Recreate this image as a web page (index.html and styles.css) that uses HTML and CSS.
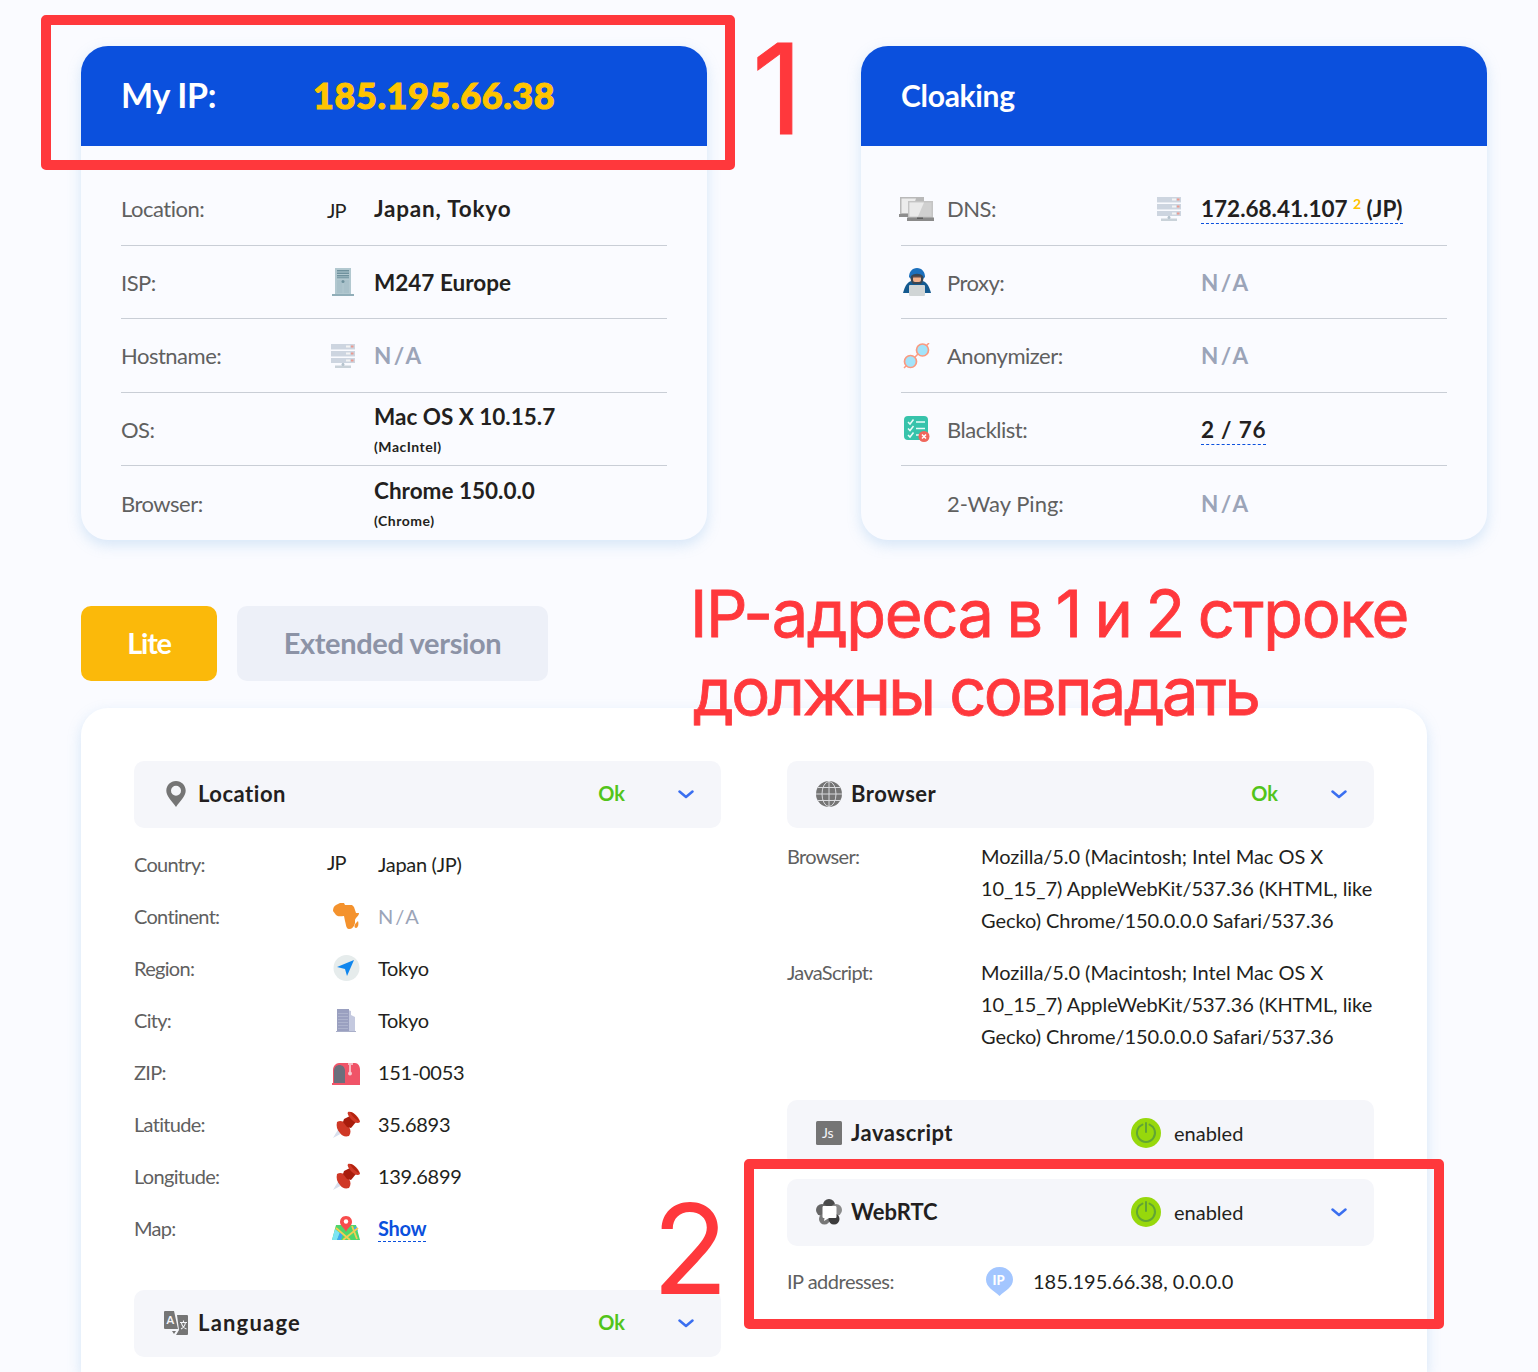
FILE: index.html
```html
<!DOCTYPE html>
<html lang="en">
<head>
  <meta charset="UTF-8">
  <meta name="viewport" content="width=device-width, initial-scale=1.0">
  <title>My IP</title>
  <link rel="stylesheet" href="styles.css">
</head>
<body>
  <!-- Shared icons -->
  <svg class="sprite" aria-hidden="true">
    <symbol id="host" viewBox="0 0 24 24">
      <path fill="#cdd5e0" d="M0 0h24v5H0zM0 7h24v5H0zM0 14h24v5H0z"/>
      <path fill="#e6eaf1" d="M0 5h24v1H0zM0 12h24v1H0z"/>
      <path fill="#f3f3f3" d="M15 1.500h4v2h-4zM15 8.500h4v2h-4zM15 15.500h4v2h-4z"/>
      <path fill="#eb9a90" d="M20 1.500h2.500v2H20zM20 8.500h2.500v2H20zM20 15.500h2.500v2H20z"/>
      <path fill="#c9d2d9" d="M11 19h2v2h-2zM4 21.500h16V24H4z"/>
      <circle cx="12" cy="20.500" r="1.500" fill="#b5c3ce"/>
    </symbol>
    <symbol id="pushpin" viewBox="0 0 27 27">
      <path fill="#d9dfec" d="M0 27l6-10 5 4z"/>
      <path fill="#cf3826" d="M4 11c3-2 6-1 8 1l4 4c2 3 2 6 0 9-4 1-7 0-9-3-3-3-4-7-3-11z"/>
      <path fill="#a81c0c" d="M11 8l6-3 6 6-5 6-4-1-4-5z"/>
      <path fill="#cf3826" d="M15 1c4-2 12 6 12 10-2 2-5 1-8-2s-5-6-4-8z"/>
      <path fill="#b3230f" d="M17 1c3 0 8 5 9 9-3-1-8-6-9-9z"/>
    </symbol>
    <symbol id="power" viewBox="0 0 30 30">
      <circle cx="15" cy="15" r="15" fill="#97d80c"/>
      <path fill="none" stroke="#62a534" stroke-width="2" stroke-linecap="round" d="M11.500 6.600a9 9 0 1 0 7 0M15 5v9"/>
    </symbol>
    <symbol id="chevron" viewBox="0 0 16 9">
      <path fill="none" stroke="#3a6ff0" stroke-width="2.500" stroke-linecap="round" stroke-linejoin="round" d="M1.500 1.500L8 7l6.500-5.500"/>
    </symbol>
  </svg>

  <div class="page">
    <div class="cards">
      <section class="card">
        <header class="card-head">
          <h2 class="my-ip">My IP:</h2>
          <span class="ip">185.195.66.38</span>
        </header>
        <div class="rows">
          <div class="row">
            <span class="label">Location:</span>
            <span class="flag">JP</span>
            <span class="value place">Japan, Tokyo</span>
          </div>
          <div class="row">
            <span class="label">ISP:</span>
            <svg class="icon" width="22" height="28" viewBox="0 0 22 28">
              <path fill="#b2c8d0" d="M3 0h16v26H3z"/>
              <path fill="#6f919d" d="M5 2h12v1.500H5zM5 4.500h12V6H5zM5 7h12v1.500H5zM5 9.300h12v1H5z"/>
              <path fill="#a9c1ca" d="M5 12h5.500v13H5zM11.500 12H17v13h-5.500z"/>
              <circle cx="11" cy="13.500" r="1.500" fill="#6f919d"/>
              <path fill="#91aeb9" d="M0 26h22v2H0z"/>
            </svg>
            <span class="value">M247 Europe</span>
          </div>
          <div class="row">
            <span class="label">Hostname:</span>
            <svg class="icon" width="24" height="24"><use href="#host"/></svg>
            <span class="value muted">N/A</span>
          </div>
          <div class="row">
            <span class="label">OS:</span>
            <span></span>
            <span class="value stacked">Mac OS X 10.15.7 <small>(MacIntel)</small></span>
          </div>
          <div class="row">
            <span class="label">Browser:</span>
            <span></span>
            <span class="value stacked">Chrome 150.0.0 <small>(Chrome)</small></span>
          </div>
        </div>
      </section>

      <section class="card cloaking">
        <header class="card-head">
          <h2>Cloaking</h2>
        </header>
        <div class="rows">
          <div class="row">
            <svg class="icon" width="35" height="24" viewBox="0 0 35 24">
              <path fill="#b9b9b9" d="M1 0h24v17H1z"/>
              <path fill="#ececec" d="M2.500 1.500H17L12 16H2.500z"/>
              <path fill="#8d8d8d" d="M0 17h10v3H0z"/>
              <path fill="#c4c4c4" d="M9 4h25v17H9z"/>
              <path fill="#d0d0d0" d="M10.500 5.500h22v14h-22z"/>
              <path fill="#eaeaea" d="M10.500 5.500H25l-6 14h-8.500z"/>
              <path fill="#8a8a8a" d="M8 20.500h27V24H8z"/>
              <path fill="#5e5e5e" d="M18 20.500h6v1.500h-6z"/>
            </svg>
            <span class="label">DNS:</span>
            <svg class="icon" width="24" height="24"><use href="#host"/></svg>
            <span class="value"><a class="dashed" href="#">172.68.41.107 <sup>2</sup> (JP)</a></span>
          </div>
          <div class="row">
            <svg class="icon" width="28" height="28" viewBox="0 0 28 28">
              <path fill="#145a90" d="M6 14c3-2 13-2 16 0 3 2 5 7 6 11H0c1-4 3-9 6-11z"/>
              <path fill="#1c70bd" d="M14 0c5 0 8 4 8 9-1 1-2 2-3 2H9c-1 0-2-1-3-2 0-5 3-9 8-9z"/>
              <path fill="#3a4652" d="M8 8c3-3 9-3 12 0 1 3 0 6-2 8h-8c-2-2-3-5-2-8z"/>
              <rect x="10" y="8" width="8" height="6" rx="2" fill="#f2b18c"/>
              <path fill="#5e4b4b" d="M10 8h8v1.500h-8z"/>
              <rect x="6" y="17" width="16" height="11" rx="1" fill="#d0d5d6"/>
            </svg>
            <span class="label">Proxy:</span>
            <span></span>
            <span class="value muted">N/A</span>
          </div>
          <div class="row">
            <svg class="icon" width="27" height="26" viewBox="0 0 27 26">
              <path stroke="#fb9a80" stroke-width="1.500" d="M1 25l3-3M23 3l3-3M11 15l5-5"/>
              <circle cx="7.500" cy="18.500" r="6" fill="#a2e3fa" stroke="#fb9a80" stroke-width="1.700"/>
              <circle cx="19.500" cy="7" r="6" fill="#a2e3fa" stroke="#fb9a80" stroke-width="1.700"/>
            </svg>
            <span class="label">Anonymizer:</span>
            <span></span>
            <span class="value muted">N/A</span>
          </div>
          <div class="row">
            <svg class="icon" width="26" height="26" viewBox="0 0 26 26">
              <rect width="24" height="24" rx="4" fill="#37c3ab"/>
              <path fill="none" stroke="#e9fbf7" stroke-width="1.500" d="M4 6l2 2 3.500-4.500M4 12.500l2 2L9.500 10M4 19l2 2 3.500-4.500M12 6h9M12 12.500h9M12 19h3"/>
              <circle cx="20" cy="20.500" r="5.500" fill="#f0665c"/>
              <path stroke="#fff" stroke-width="1.500" d="M18 18.500l4 4M22 18.500l-4 4"/>
            </svg>
            <span class="label">Blacklist:</span>
            <span></span>
            <span class="value"><a class="dashed count" href="#">2 / 76</a></span>
          </div>
          <div class="row">
            <span></span>
            <span class="label ping">2-Way Ping:</span>
            <span></span>
            <span class="value muted">N/A</span>
          </div>
        </div>
      </section>
    </div>

    <div class="tabs">
      <button class="tab active">Lite</button>
      <button class="tab">Extended version</button>
    </div>

    <div class="panel">
      <div class="column">
        <div class="section-head">
          <svg class="icon" width="28" height="26" viewBox="0 0 28 26">
            <path fill="#757575" fill-rule="evenodd" d="M14 0c5.500 0 9.700 4.300 9.700 9.700C23.700 15 18 20 14 26 10 20 4.300 15 4.300 9.700 4.300 4.300 8.500 0 14 0zm0 4.700a5 5 0 1 0 0 10 5 5 0 0 0 0-10z"/>
          </svg>
          <h3>Location</h3>
          <span class="ok">Ok</span>
          <svg class="chevron" width="16" height="9"><use href="#chevron"/></svg>
        </div>
        <div class="details">
          <div class="detail">
            <span class="label">Country:</span>
            <span class="flag">JP</span>
            <span class="value">Japan (JP)</span>
          </div>
          <div class="detail">
            <span class="label">Continent:</span>
            <svg class="icon" width="26" height="27" viewBox="0 0 26 27">
              <path fill="#f4922d" d="M3 2l4-2h4l1 2h7l2 2 2 6h3c0 3-3 4-4 7v3c-1 4-3 6-6 6-3 0-3-5-4-8l-1-5c-3 0-6 1-8-1L0 8c0-3 1-5 3-6z"/>
              <path fill="#f4922d" d="M25 18c1 3 0 7-2 7s-2-3 0-5z"/>
            </svg>
            <span class="value muted">N/A</span>
          </div>
          <div class="detail">
            <span class="label">Region:</span>
            <svg class="icon" width="27" height="26" viewBox="0 0 27 26">
              <circle cx="13.500" cy="13" r="13" fill="#e6ecec"/>
              <path fill="#0f86ee" d="M21 5L4 12l8 2 2 7z"/>
            </svg>
            <span class="value">Tokyo</span>
          </div>
          <div class="detail">
            <span class="label">City:</span>
            <svg class="icon" width="20" height="23" viewBox="0 0 20 23">
              <path fill="#c4c9df" d="M12 1l3 1v4l4 2v15h-7z"/>
              <path fill="#9aa0c0" d="M1 0h12v22H1z"/>
              <path stroke="#adb3cd" d="M2 4.500h10M2 7.500h10M2 10.500h10M2 13.500h10M2 16.500h10M2 19.500h10"/>
              <path fill="#a9afc9" d="M0 22h20v1H0z"/>
            </svg>
            <span class="value">Tokyo</span>
          </div>
          <div class="detail">
            <span class="label">ZIP:</span>
            <svg class="icon mailbox" width="28" height="22" viewBox="0 0 28 22">
              <path fill="#f05468" d="M7 0h16c3 0 5 3 5 7v15H1V7c0-4 3-7 6-7z"/>
              <path fill="#6b6f7c" d="M2 20V8c0-8 11-8 11 0v12z"/>
              <path fill="#f9b9c2" d="M16 0h5v2h-2v8h-2V2h-1z"/>
              <circle cx="18" cy="10.500" r="2" fill="#f7ccd2"/>
              <path fill="#f05468" d="M0 20h14v2H0z"/>
            </svg>
            <span class="value">151-0053</span>
          </div>
          <div class="detail">
            <span class="label">Latitude:</span>
            <svg class="icon" width="27" height="27"><use href="#pushpin"/></svg>
            <span class="value">35.6893</span>
          </div>
          <div class="detail">
            <span class="label">Longitude:</span>
            <svg class="icon" width="27" height="27"><use href="#pushpin"/></svg>
            <span class="value">139.6899</span>
          </div>
          <div class="detail">
            <span class="label">Map:</span>
            <svg class="icon" width="28" height="24" viewBox="0 0 28 24">
              <path fill="#4fd66b" d="M4 9h20l4 15H0z"/>
              <path fill="#7ce5f3" d="M3 13l5 4-3 7H0z"/>
              <path fill="#3ea8f2" d="M8 16l3 2-2 6H5zM24 10l2 5-5-2z"/>
              <path fill="none" stroke="#f3cd52" stroke-width="1.800" d="M4 12l14 12M26 12L11 24M20 10l5 13"/>
              <path fill="#f84c4c" d="M14 0c4 0 6 3 6 6 0 4-4 5-6 10-2-5-6-6-6-10 0-3 2-6 6-6z"/>
              <circle cx="14" cy="5.500" r="2.200" fill="#fff"/>
            </svg>
            <span class="value"><a class="show" href="#">Show</a></span>
          </div>
        </div>
        <div class="section-head">
          <svg class="icon" width="28" height="26" viewBox="0 0 28 26">
            <path fill="#757575" d="M3 1h9l4 18H3c-1 0-1-1-1-1V2s0-1 1-1z"/>
            <path fill="#757575" d="M15 5h10c1 0 1 1 1 1v18s0 1-1 1H14l3-5zM10 21h4l-2 3z"/>
            <text class="glyph" x="4.500" y="14">A</text>
            <path fill="none" stroke="#f5f6fa" stroke-width="1.100" d="M18 12.500h7M21.500 10.500v2M19 19c3-1.500 4-4 4.500-6.500M19.500 13c.500 3 2.500 5 5 6"/>
          </svg>
          <h3 class="language">Language</h3>
          <span class="ok">Ok</span>
          <svg class="chevron" width="16" height="9"><use href="#chevron"/></svg>
        </div>
      </div>

      <div class="column">
        <div class="section-head">
          <svg class="icon" width="28" height="26" viewBox="0 0 28 26">
            <circle cx="14" cy="13" r="13" fill="#757575"/>
            <path fill="none" stroke="#d9dadd" d="M14 0v26M1 13h26M3 6.500h22M3 19.500h22"/>
            <ellipse cx="14" cy="13" rx="7" ry="12.500" fill="none" stroke="#d9dadd"/>
          </svg>
          <h3>Browser</h3>
          <span class="ok">Ok</span>
          <svg class="chevron" width="16" height="9"><use href="#chevron"/></svg>
        </div>
        <div class="agents">
          <div class="agent">
            <span class="label">Browser:</span>
            <p>Mozilla/5.0 (Macintosh; Intel Mac OS X<br>10_15_7) AppleWebKit/537.36 (KHTML, like<br>Gecko) Chrome/150.0.0.0 Safari/537.36</p>
          </div>
          <div class="agent">
            <span class="label">JavaScript:</span>
            <p>Mozilla/5.0 (Macintosh; Intel Mac OS X<br>10_15_7) AppleWebKit/537.36 (KHTML, like<br>Gecko) Chrome/150.0.0.0 Safari/537.36</p>
          </div>
        </div>
        <div class="section-head">
          <svg class="icon" width="28" height="26" viewBox="0 0 28 26">
            <rect x="1" y="1" width="26" height="24" rx="1.500" fill="#757575"/>
            <text class="glyph js" x="7" y="18">Js</text>
          </svg>
          <h3>Javascript</h3>
          <span class="status"><svg width="30" height="30"><use href="#power"/></svg>enabled</span>
        </div>
        <div class="section-head">
          <svg class="icon" width="28" height="26" viewBox="0 0 28 26">
            <circle cx="14" cy="6" r="6" fill="#4a4a4a"/>
            <circle cx="7" cy="11" r="6" fill="#666"/>
            <circle cx="21" cy="11" r="6" fill="#8b8b8b"/>
            <circle cx="9.500" cy="20" r="5.500" fill="#777"/>
            <circle cx="19" cy="20" r="5.500" fill="#3c3c3c"/>
            <path fill="#fff" d="M8.500 7h11.500c1 0 1.500.5 1.500 1.500v9c0 1-.5 1.500-1.500 1.500h-6L9 22l.5-3c-1.500 0-2-.5-2-1.500v-9C7.500 7.500 8 7 8.500 7z"/>
          </svg>
          <h3 class="webrtc">WebRTC</h3>
          <span class="status"><svg width="30" height="30"><use href="#power"/></svg>enabled</span>
          <svg class="chevron" width="16" height="9"><use href="#chevron"/></svg>
        </div>
        <div class="addresses">
          <span class="label">IP addresses:</span>
          <svg width="27" height="29" viewBox="0 0 27 29">
            <path fill="#a3c6ff" d="M13.500 0C21 0 27 5.500 27 12.500c0 8-8 11-13.500 16.500C8 23.500 0 20.500 0 12.500 0 5.500 6 0 13.500 0z"/>
            <text class="glyph ip-mark" x="6.500" y="17.500">IP</text>
          </svg>
          <span class="value">185.195.66.38, 0.0.0.0</span>
        </div>
      </div>
    </div>
  </div>

  <!-- Annotations over the page -->
  <div class="frame frame-one"></div>
  <div class="frame frame-two"></div>
  <div class="mark mark-one">1</div>
  <div class="mark mark-two">2</div>
  <p class="note">IP-адреса в 1 и 2 строке<br><span class="note-tight">должны совпадать</span></p>
</body>
</html>
```
FILE: styles.css
```css
* {
  box-sizing: border-box;
  margin: 0;
  padding: 0;
}

body {
  position: relative;
  height: 1372px;
  overflow: hidden;
  background: #fafbff;
  color: #231f20;
  font-family: Lato, "Open Sans", sans-serif;
}

.sprite {
  position: absolute;
  width: 0;
  height: 0;
}

a {
  color: inherit;
  text-decoration: none;
}

.page {
  padding: 46px 51px 0 81px;
}

/* Top cards */
.cards {
  display: grid;
  grid-template-columns: 626px 626px;
  gap: 154px;
}

.card {
  height: 494px;
  border-radius: 27px;
  overflow: hidden;
  background: #fafbff;
  box-shadow: 0 5px 14px rgba(120, 175, 225, 0.28);
}

.card-head {
  display: flex;
  align-items: center;
  height: 100px;
  padding: 0 40px 3px;
  background: #0b50dd;
  color: #fff;
}

.card-head h2 {
  width: 192px;
  font-size: 30px;
  font-weight: 700;
  letter-spacing: -0.3px;
}

.card-head .my-ip {
  font-size: 34px;
}

.ip {
  color: #ffc400;
  font-size: 36px;
  font-weight: 900;
  letter-spacing: 0.6px;
  -webkit-text-stroke: 1px #ffc400;
}

.rows {
  padding: 26.6px 40px 0;
}

.row {
  display: grid;
  grid-template-columns: 190px 64px 1fr;
  align-items: center;
  height: 73.45px;
  border-bottom: 1px solid #c9ced6;
}

.row:last-child {
  border-bottom: 0;
}

.cloaking .row {
  grid-template-columns: 46px 190px 64px 1fr;
}

.row .icon,
.detail .icon {
  justify-self: center;
}

.cloaking .icon:first-child {
  margin: 0 14px 0 -1px;
}

.label {
  color: #606060;
  font-size: 22px;
  letter-spacing: -0.5px;
}

.ping {
  letter-spacing: 0;
}

.flag {
  padding-left: 16px;
  font-size: 20px;
  letter-spacing: -1px;
}

.row .flag {
  padding-top: 3px;
}

.row .value {
  margin-left: -1px;
  font-size: 22.5px;
  font-weight: 700;
}

.cloaking .row .value {
  margin-left: 0;
}

.row .place {
  letter-spacing: 0.8px;
}

.row .muted,
.detail .muted {
  color: #9ba4b8;
  letter-spacing: 2.5px;
}

.stacked small {
  display: block;
  margin-top: 8px;
  font-size: 14px;
  line-height: 17px;
  letter-spacing: 0.5px;
}

.dashed {
  padding-bottom: 1px;
  border-bottom: 1px dashed #0b50dd;
}

.count {
  letter-spacing: 0.8px;
}

sup {
  color: #ffc400;
  font-size: 14px;
  line-height: 0;
}

/* Version switch */
.tabs {
  display: flex;
  gap: 20px;
  margin: 66px 0 27px;
}

.tab {
  width: 311px;
  height: 75px;
  padding-bottom: 2px;
  border: 0;
  border-radius: 10px;
  background: #edf0f8;
  color: #8c93a6;
  font-family: inherit;
  font-size: 29px;
  font-weight: 700;
  letter-spacing: -0.35px;
}

.tab.active {
  width: 136px;
  background: #fbb90a;
  color: #fff;
  letter-spacing: -1.3px;
}

/* Details panel */
.panel {
  display: grid;
  grid-template-columns: 587px 587px;
  gap: 66px;
  width: 1346px;
  height: 664px;
  padding: 53px 53px 0;
  border-radius: 27px 27px 0 0;
  background: #fff;
  box-shadow: 0 5px 14px rgba(120, 175, 225, 0.28);
}

.section-head {
  display: flex;
  align-items: center;
  height: 67px;
  padding: 0 27px 2px 28px;
  border-radius: 10px;
  background: #f5f6fa;
}

.section-head h3 {
  width: 280px;
  margin-left: 8px;
  font-size: 22px;
  font-weight: 700;
  letter-spacing: 0.5px;
}

.section-head .language {
  letter-spacing: 1.2px;
}

.section-head .webrtc {
  letter-spacing: 0;
}

.section-head + .section-head {
  margin-top: 12px;
}

.chevron {
  margin-top: 2px;
  margin-left: auto;
}

.ok {
  margin-left: auto;
  padding-bottom: 2px;
  color: #52c41a;
  font-size: 20px;
  font-weight: 700;
}

.ok + .chevron {
  margin-left: 53px;
}

.status {
  display: flex;
  align-items: center;
  gap: 13px;
  font-size: 20px;
}

.glyph {
  fill: #f5f6fa;
  font-size: 11px;
  font-weight: 700;
}

.js {
  font-size: 14px;
  font-weight: 400;
}

.ip-mark {
  fill: #fff;
  font-size: 13px;
  font-weight: 900;
}

.details {
  padding: 10px 0 36px;
}

.detail {
  display: grid;
  grid-template-columns: 180px 64px 1fr;
  align-items: center;
  height: 52px;
  font-size: 20px;
}

.detail span {
  margin-top: -1px;
}

.detail .value {
  letter-spacing: -0.3px;
}

.detail .muted {
  letter-spacing: 2px;
}

.panel .label {
  font-size: 20px;
  letter-spacing: -0.7px;
}

.detail .flag {
  padding: 0 0 3px 13px;
}

.mailbox {
  margin-top: 3px;
}

.show {
  padding-bottom: 1px;
  border-bottom: 1px dashed #0b50dd;
  color: #0b50dd;
  font-weight: 700;
}

.agents {
  padding: 12px 0 48px;
}

.agent {
  display: grid;
  grid-template-columns: 194px 1fr;
  font-size: 20px;
  line-height: 32px;
  letter-spacing: -0.05px;
}

.agent + .agent {
  margin-top: 20px;
}

.agent p {
  white-space: nowrap;
}

.addresses {
  display: grid;
  grid-template-columns: 199px 47px 1fr;
  align-items: center;
  height: 70px;
  font-size: 20px;
}

.addresses .label {
  letter-spacing: -0.5px;
}

/* Annotations */
.frame {
  position: absolute;
  border: 10px solid #ff383c;
  border-radius: 5px;
}

.frame-one {
  left: 41px;
  top: 15px;
  width: 694px;
  height: 155px;
}

.frame-two {
  left: 744px;
  top: 1159px;
  width: 700px;
  height: 170px;
}

.mark,
.note {
  position: absolute;
  color: #ff383c;
  font-family: Inter, sans-serif;
}

.mark {
  font-size: 125px;
  line-height: 125px;
}

.mark-one {
  left: 752px;
  top: 26px;
  -webkit-text-stroke: 1px #ff383c;
}

.mark-two {
  left: 652px;
  top: 1186px;
}

.note {
  left: 690px;
  top: 575px;
  font-size: 65px;
  line-height: 78px;
  letter-spacing: -1.4px;
  word-spacing: -3px;
  white-space: nowrap;
  -webkit-text-stroke: 0.8px #ff383c;
}

.note-tight {
  margin-left: 3px;
  letter-spacing: -2.6px;
  word-spacing: 0;
}
```
